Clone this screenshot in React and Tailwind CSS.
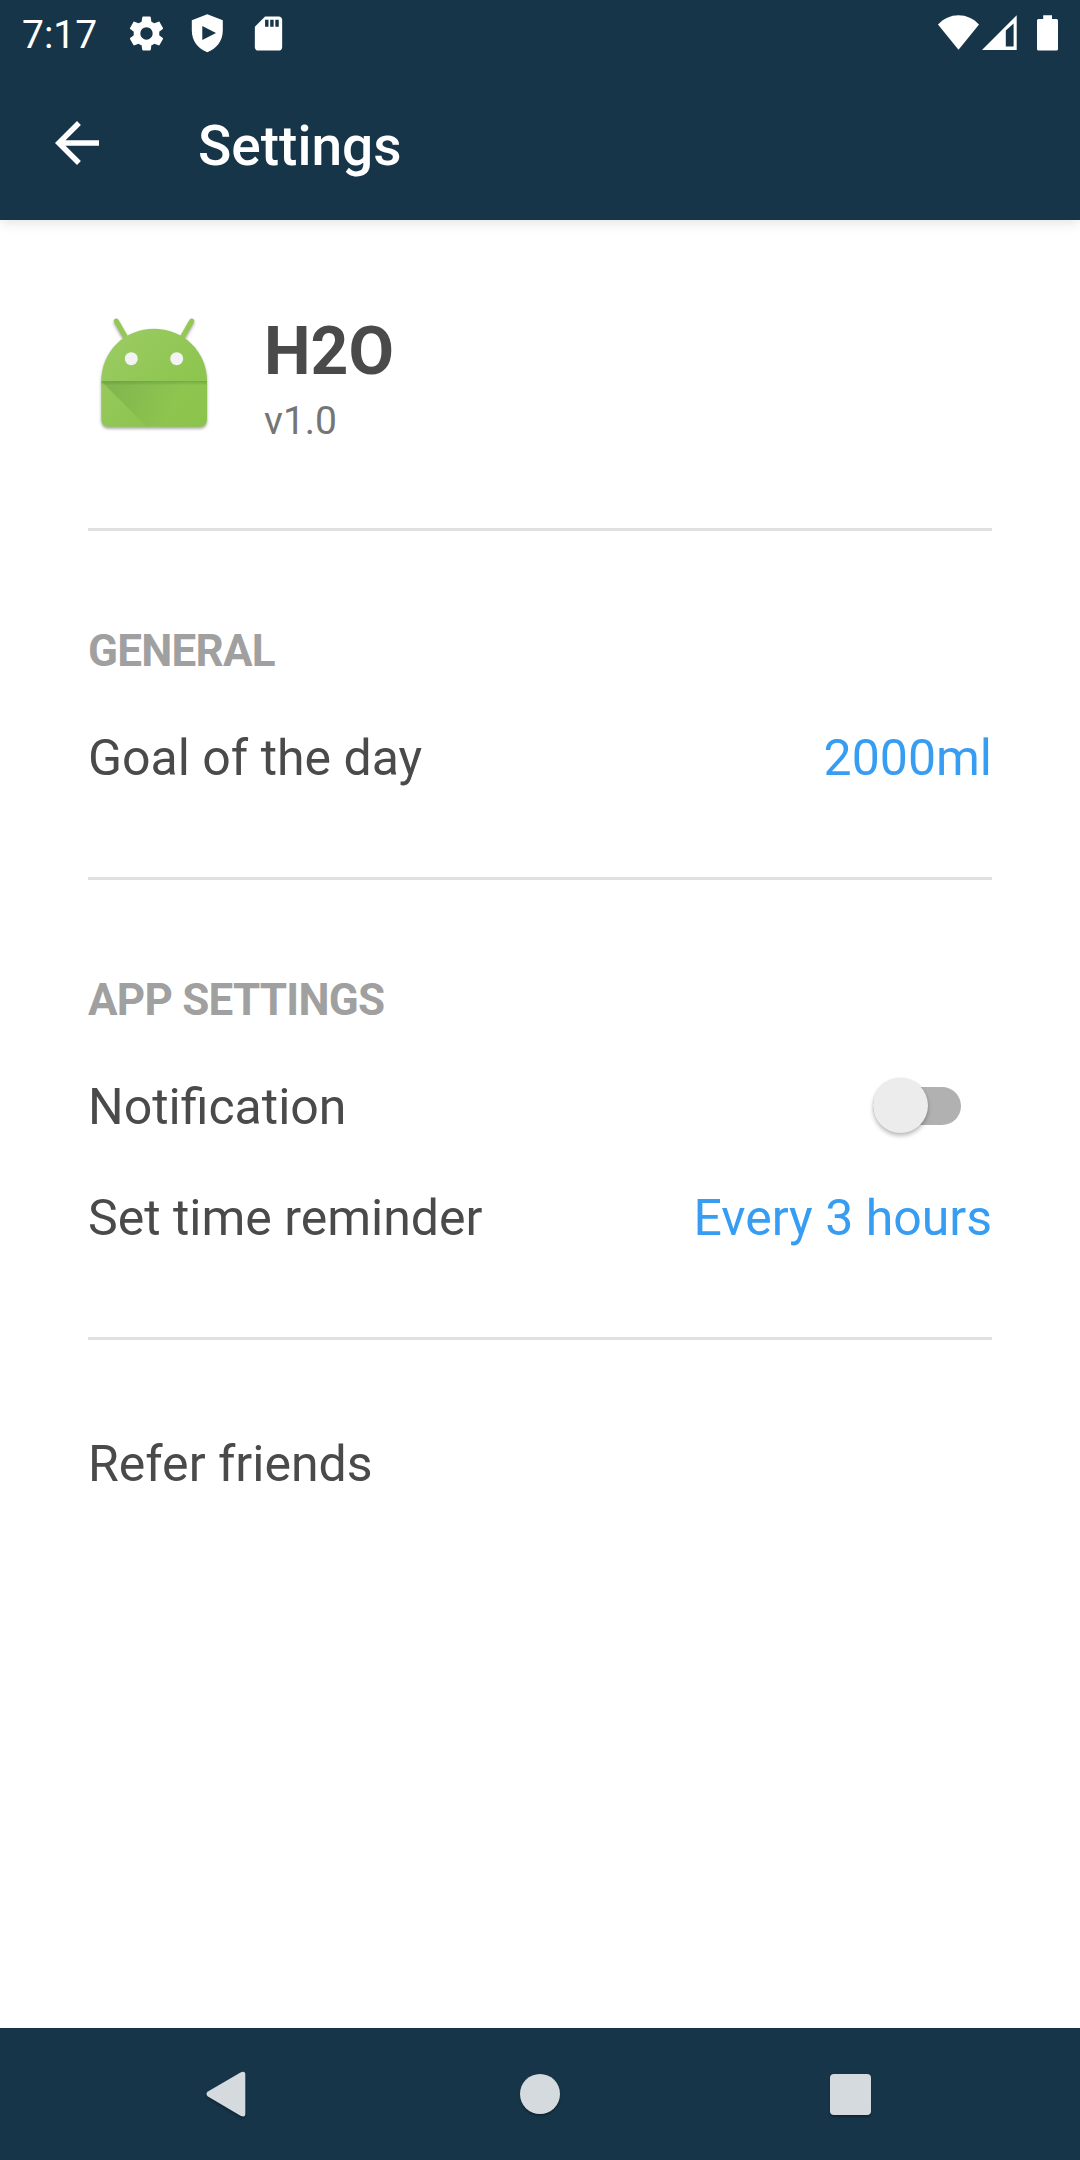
import React from "react";

function GearIcon() {
  return (
    <svg className="h-[41px] w-[41px]" viewBox="0 0 24 24" fill="currentColor">
      <path d="M19.43 12.98c.04-.32.07-.64.07-.98s-.03-.66-.07-.98l2.11-1.65c.19-.15.24-.42.12-.64l-2-3.46c-.12-.22-.39-.3-.61-.22l-2.49 1c-.52-.4-1.08-.73-1.69-.98l-.38-2.65C14.46 2.18 14.25 2 14 2h-4c-.25 0-.46.18-.49.42l-.38 2.65c-.61.25-1.17.59-1.69.98l-2.49-1c-.23-.09-.49 0-.61.22l-2 3.46c-.13.22-.07.49.12.64l2.11 1.65c-.04.32-.07.65-.07.98s.03.66.07.98l-2.11 1.65c-.19.15-.24.42-.12.64l2 3.46c.12.22.39.3.61.22l2.49-1c.52.4 1.08.73 1.69.98l.38 2.65c.03.24.24.42.49.42h4c.25 0 .46-.18.49-.42l.38-2.65c.61-.25 1.17-.59 1.69-.98l2.49 1c.23.09.49 0 .61-.22l2-3.46c.12-.22.07-.49-.12-.64l-2.11-1.65zM12 15.6c-1.98 0-3.6-1.62-3.6-3.6s1.62-3.6 3.6-3.6 3.6 1.62 3.6 3.6-1.62 3.6-3.6 3.6z" />
    </svg>
  );
}

function ShieldIcon() {
  return (
    <svg className="h-[41px] w-[41px]" viewBox="0 0 41 41" fill="currentColor">
      <path
        fillRule="evenodd"
        d="M20.3 1.2L35.8 7.2V17.5C35.8 28 29 36.300 20.300 39.200C11.600 36.300 4.800 28 4.800 17.500V7.200ZM15.300 13V27L29 20Z"
      />
    </svg>
  );
}

function SdCardIcon() {
  return (
    <svg className="h-[41px] w-[41px]" viewBox="0 0 24 24" fill="currentColor">
      <path d="M18 2h-8L4.020 8 4 20c0 1.100.9 2 2 2h12c1.100 0 2-.9 2-2V4c0-1.100-.9-2-2-2zm-6 6h-2V4h2v4zm3 0h-2V4h2v4zm3 0h-2V4h2v4z" />
    </svg>
  );
}

function WifiIcon() {
  return (
    <svg className="h-[36px] w-[41px]" viewBox="0 0 41 36" fill="currentColor">
      <path d="M0 9.500C5.500 3.700 12.500 0.300 20.500 0.300S35.500 3.700 41 9.500L20.500 34.700Z" />
    </svg>
  );
}

function SignalIcon() {
  return (
    <svg className="h-[36px] w-[35px]" viewBox="0 0 35 36" fill="currentColor">
      <path fillRule="evenodd" d="M0 35L34.700 0.300V35ZM23.800 15.500V31.500H31.600V8.500Z" />
    </svg>
  );
}

function BatteryIcon() {
  return (
    <svg className="h-[36px] w-[21px]" viewBox="0 0 21 36" fill="currentColor">
      <path d="M6.200 0.300H15V4H19.500Q21 4 21 5.500V34Q21 35.600 19.500 35.600H1.500Q0 35.600 0 34V5.500Q0 4 1.500 4H6.200Z" />
    </svg>
  );
}

function StatusBar() {
  return (
    <div className="flex h-[66px] items-center justify-between pl-[22px] pr-[22px]">
      <div className="flex items-center">
        <span className="w-[104px] pt-1 text-[39px] leading-[66px]">7:17</span>
        <div className="flex items-center gap-[20px]">
          <GearIcon />
          <ShieldIcon />
          <SdCardIcon />
        </div>
      </div>
      <div className="flex items-center">
        <WifiIcon />
        <div className="ml-[3px] mr-[20px]">
          <SignalIcon />
        </div>
        <BatteryIcon />
      </div>
    </div>
  );
}

function AppBar() {
  return (
    <div className="flex h-[154px] items-center gap-[88px] pl-[44px]">
      <svg className="h-[66px] w-[66px]" viewBox="0 0 24 24" fill="currentColor">
        <path d="M20 11H7.830l5.590-5.590L12 4l-8 8 8 8 1.410-1.410L7.830 13H20v-2z" />
      </svg>
      <h1 className="pt-[6px] text-[55px] font-medium leading-[66px]">Settings</h1>
    </div>
  );
}

function AndroidLogo() {
  return (
    <svg
      className="h-[132px] w-[132px] drop-shadow-[0_2px_1.5px_rgba(0,0,0,0.35)]"
      viewBox="0 0 132 132"
    >
      <defs>
        <linearGradient id="body" x1="0" y1="0" x2="1" y2="1">
          <stop offset="0" stopColor="#9ccc65" />
          <stop offset="0.6" stopColor="#8fc652" />
          <stop offset="1" stopColor="#8bc34a" />
        </linearGradient>
        <linearGradient id="fold" gradientUnits="userSpaceOnUse" x1="25" y1="70" x2="84" y2="98">
          <stop offset="0" stopColor="#33691e" stopOpacity="0.2" />
          <stop offset="1" stopColor="#33691e" stopOpacity="0" />
        </linearGradient>
        <linearGradient id="edge" x1="0" y1="0" x2="0" y2="1">
          <stop offset="0" stopColor="#33691e" stopOpacity="0.28" />
          <stop offset="1" stopColor="#33691e" stopOpacity="0" />
        </linearGradient>
      </defs>
      <path
        d="M28.300 13L38 30M103.700 13L94 30"
        stroke="#93c854"
        strokeWidth="5"
        strokeLinecap="round"
      />
      <path
        d="M13.300 73.300C13.300 43 37 20.700 66 20.700S119 43 119 73.300V111Q119 118.700 111.500 118.700H20.800Q13.300 118.700 13.300 111Z"
        fill="url(#body)"
      />
      <path d="M13.300 73.300H119V111Q119 118.700 111.500 118.700H58.700Z" fill="url(#fold)" />
      <rect x="13.300" y="73" width="105.700" height="4.500" fill="url(#edge)" />
      <circle cx="43.300" cy="50.700" r="6.500" fill="#f3f3f3" />
      <circle cx="88.700" cy="50.700" r="6.500" fill="#f3f3f3" />
    </svg>
  );
}

function Row({ label, children }) {
  return (
    <div className="flex items-center justify-between text-[50px] leading-[58px]">
      <span className="text-[#4a4a4a]">{label}</span>
      {children}
    </div>
  );
}

function SectionTitle({ children }) {
  return (
    <h2 className="text-[44px] font-bold leading-[52px] tracking-[-0.75px] text-[#a0a0a0]">
      {children}
    </h2>
  );
}

function Switch() {
  return (
    <div className="mb-[3px] mr-[31px] flex h-[55px] w-[88px] items-center">
      <div className="flex h-[38px] w-full items-center rounded-full bg-[#b1b1b1]">
        <div className="h-[55px] w-[55px] shrink-0 rounded-full bg-[#ececec] shadow-[0_3px_4px_rgba(0,0,0,0.25),0_0_2px_rgba(0,0,0,0.1)]" />
      </div>
    </div>
  );
}

function NavBar() {
  return (
    <nav className="flex h-[132px] items-center bg-[#173549] pb-px pl-[206px] text-[#d5dade]">
      <svg className="h-[46px] w-[40px] drop-shadow-[0_2px_1px_rgba(0,0,0,0.3)]" viewBox="0 0 40 46" fill="currentColor">
        <path d="M1.500 20.800L34.500 1.400Q39.300 -0.600 39.300 3.500V43Q39.300 47 34.500 44.800L1.500 25.200Q-0.500 23 1.500 20.800Z" />
      </svg>
      <div className="ml-[274px] h-[40px] w-[40px] rounded-full bg-[#d5dade] shadow-[0_2px_2px_rgba(0,0,0,0.3)]" />
      <div className="ml-[270px] mt-px h-[41px] w-[41px] rounded-[4px] bg-[#d5dade] shadow-[0_2px_2px_rgba(0,0,0,0.3)]" />
    </nav>
  );
}

export default function App() {
  return (
    <div className="flex h-[2160px] w-[1080px] flex-col bg-white font-['Roboto',sans-serif]">
      <header className="h-[220px] bg-[#173549] text-white shadow-[0_3px_12px_rgba(0,0,0,0.11)]">
        <StatusBar />
        <AppBar />
      </header>

      <main className="flex-1 px-[88px]">
        <section className="flex h-[311px] gap-[44px] border-b-3 border-[#e0e0e0] pt-[88px]">
          <AndroidLogo />
          <div className="pt-[5px]">
            <div className="text-[66px] font-bold leading-[78px] text-[#4a4a4a]">H2O</div>
            <div className="pt-[7px] text-[39px] leading-[46px] text-[#757575]">v1.0</div>
          </div>
        </section>

        <section className="h-[349px] border-b-3 border-[#e0e0e0] pt-[94px]">
          <SectionTitle>GENERAL</SectionTitle>
          <div className="pt-[52px]">
            <Row label="Goal of the day">
              <span className="text-[#369df2]">2000ml</span>
            </Row>
          </div>
        </section>

        <section className="h-[460px] border-b-3 border-[#e0e0e0] pt-[94px]">
          <SectionTitle>APP SETTINGS</SectionTitle>
          <div className="flex flex-col gap-[53px] pt-[52px]">
            <Row label="Notification">
              <Switch />
            </Row>
            <Row label="Set time reminder">
              <span className="text-[#369df2]">Every 3 hours</span>
            </Row>
          </div>
        </section>

        <section className="pt-[95px]">
          <Row label="Refer friends" />
        </section>
      </main>

      <NavBar />
    </div>
  );
}
